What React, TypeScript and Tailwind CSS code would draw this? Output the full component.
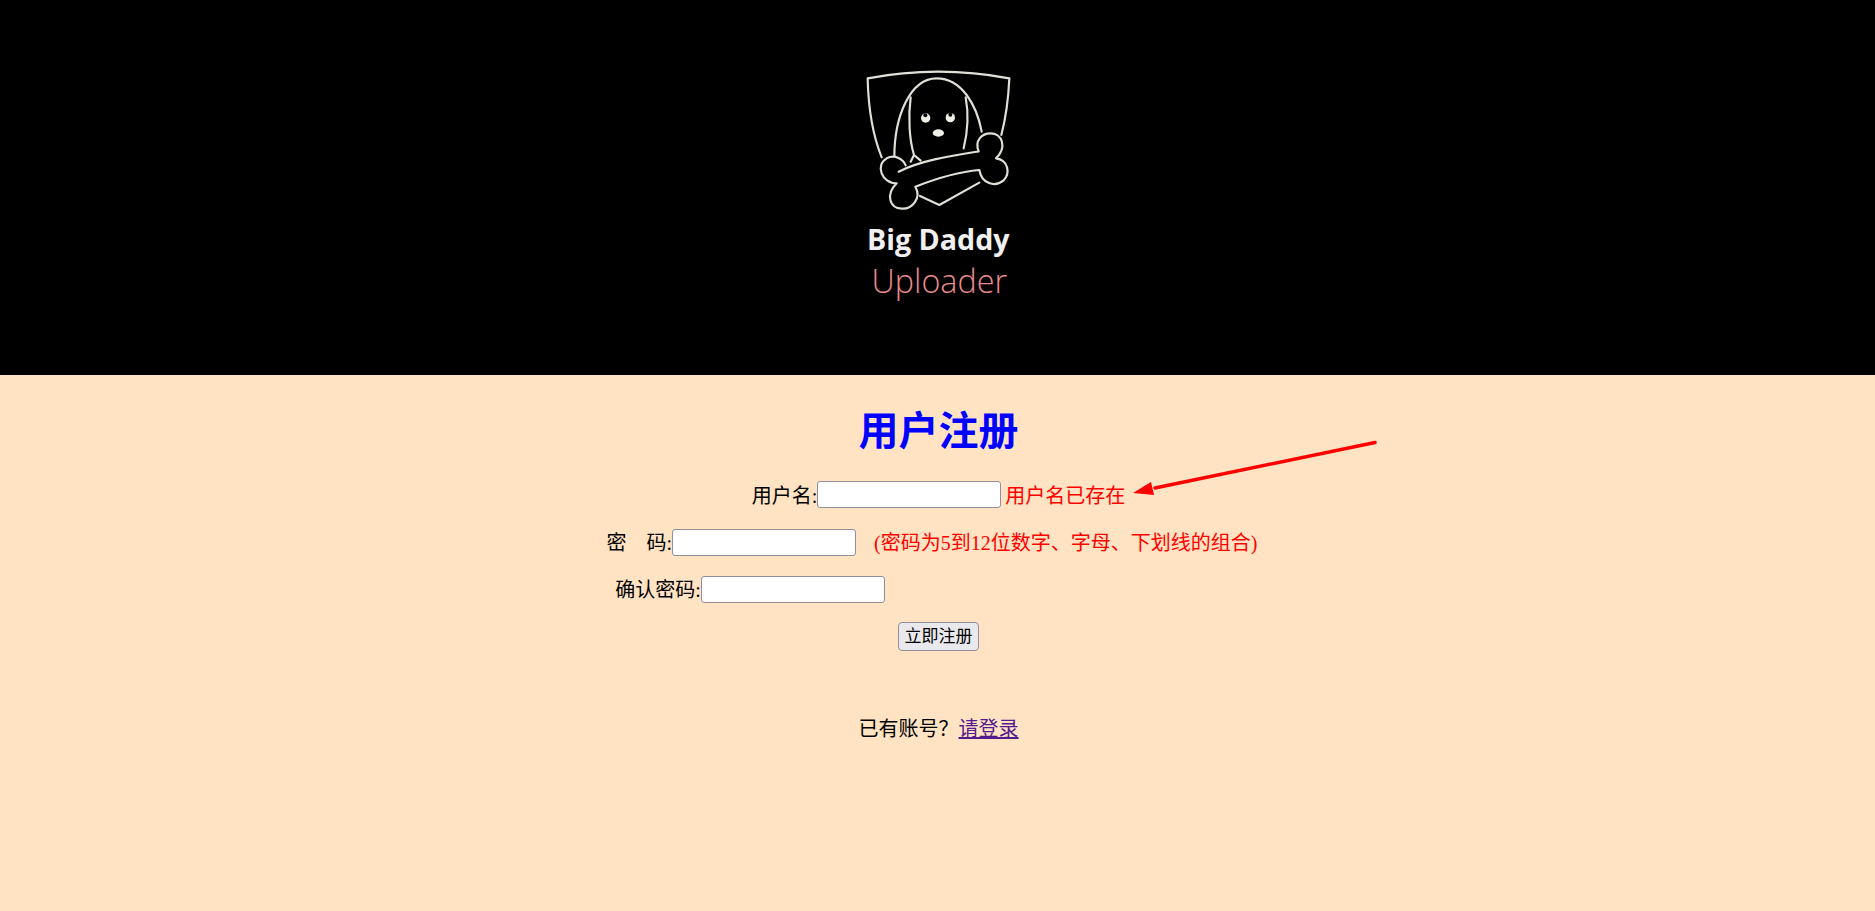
const inputClass = 'h-[27px] w-[184px] rounded-[3px] border border-[#8f8f9d] bg-white'

function Logo() {
  return (
    <svg viewBox="0 0 600 780" className="mt-[50px] ml-[5px] h-[260px] w-[200px]" fill="none" stroke="#e0e0d8" strokeWidth="6.5" strokeLinecap="round" strokeLinejoin="round">
      <path d="M125 322C100 260 85 180 83 85Q295 45 508 85C505 150 497 205 484 255" />
      <path d="M240 438L298 465L418 398" />
      <path d="M163 322C163 200 210 85 290 85C365 85 410 165 425 245" />
      <path d="M212 142C204 200 208 270 222 315L212 335M222 315L242 332" />
      <path d="M377 142C386 190 382 250 371 295" />
      <circle cx="257" cy="204" r="14" fill="#f0f0e6" stroke="none" />
      <circle cx="331" cy="203" r="14" fill="#f0f0e6" stroke="none" />
      <circle cx="256" cy="196" r="6" fill="#000" stroke="none" />
      <circle cx="331" cy="194" r="6" fill="#000" stroke="none" />
      <ellipse cx="295" cy="249" rx="17" ry="11" fill="#f0f0e6" stroke="none" />
      <path
        d="M176 365C240 332 330 318 416 304C403 272 425 250 452 250C485 250 503 290 468 325C505 330 512 370 490 392C465 412 425 402 418 360C350 366 290 385 226 410C246 445 215 478 185 476C150 475 135 435 170 400C125 400 105 345 140 325C165 312 190 328 197 346"
        fill="#000"
      />
      <text x="295" y="599" textAnchor="middle" fill="#f0f0f0" stroke="none" className="font-['Open_Sans',sans-serif] text-[86px] font-bold">
        Big Daddy
      </text>
      <text x="298" y="728" textAnchor="middle" fill="#e98a8b" stroke="none" className="font-['Open_Sans',sans-serif] text-[97px] font-light">
        Uploader
      </text>
    </svg>
  )
}

export default function App() {
  return (
    <div className="relative min-h-[911px] bg-[#ffe3c3] font-['Liberation_Serif','Noto_Sans_CJK_SC',serif] text-[20px] text-black">
      <header className="flex h-[375px] justify-center bg-black">
        <Logo />
      </header>

      <main className="flex flex-col items-center pl-[2px]">
        <h1 className="mt-[33px] font-['Liberation_Sans','Noto_Sans_CJK_SC',sans-serif] text-[40px] leading-[46px] font-bold text-[#0000ff]">用户注册</h1>

        <div className="mt-[27px] flex h-[27px] items-center">
          <label className="pt-[2px]">用户名:</label>
          <input className={inputClass} />
          <span className="ml-1 pt-[2px] text-[#ff0000]">用户名已存在</span>
        </div>

        <div className="mt-[21px] flex h-[27px] items-center pr-[13px]">
          <label>密<span className="ml-5">码:</span></label>
          <input className={inputClass} />
          <span className="ml-[18px] text-[#ff0000]">(密码为5到12位数字、字母、下划线的组合)</span>
        </div>

        <div className="mt-5 flex h-[27px] items-center pr-[377px]">
          <label>确认密码:</label>
          <input className={inputClass} />
        </div>

        <button className="mt-[19px] h-[29px] w-[81px] rounded-[4px] border border-[#8f8f9d] bg-[#e9e9ed] text-[17px]">立即注册</button>

        <p className="mt-[64px] leading-[28px]">
          已有账号？<a href="#" className="text-[#551a8b] underline">请登录</a>
        </p>
      </main>

      <svg className="absolute top-[435px] left-[1125px] h-[70px] w-[260px]" viewBox="0 0 260 70" fill="none">
        <path d="M250 7.5L30 53" stroke="#ff0000" strokeWidth="3.5" strokeLinecap="round" />
        <path d="M8 58L26 47L29 60Z" fill="#ff0000" />
      </svg>
    </div>
  )
}
